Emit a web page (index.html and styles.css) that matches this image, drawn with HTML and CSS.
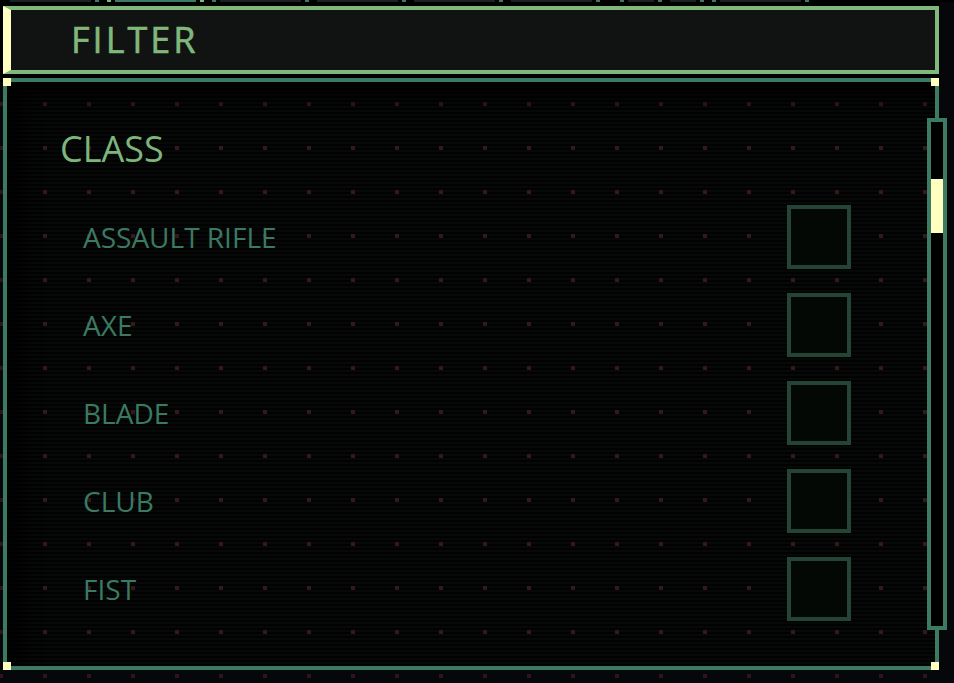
FILE: index.html
```html
<!DOCTYPE html>
<html lang="en">
<head>
<meta charset="utf-8">
<title>Filter</title>
<link rel="stylesheet" href="styles.css">
</head>
<body>
  <div class="tabs">
    <span class="seg dark w80 ml10"></span>
    <span class="seg mid w4 ml4"></span>
    <span class="seg light w4 ml8"></span>
    <span class="seg mid w80 ml4"></span>
    <span class="seg light w4 ml4"></span>
    <span class="seg mid w4 ml8"></span>
    <span class="seg dark w80 ml4"></span>
    <span class="seg mid w4 ml4"></span>
    <span class="seg dark w80 ml8"></span>
    <span class="seg mid w4 ml4"></span>
    <span class="seg dark w80 ml8"></span>
    <span class="seg mid w4 ml4"></span>
    <span class="seg dark w80 ml8"></span>
    <span class="seg mid w4 ml4"></span>
    <span class="seg mid w4 ml20"></span>
    <span class="seg dark w26 ml4"></span>
    <span class="seg mid w4 ml4"></span>
    <span class="seg dark w26 ml8"></span>
    <span class="seg mid w4 ml4"></span>
    <span class="seg mid w4 ml8"></span>
    <span class="seg dark w80 ml4"></span>
    <span class="seg mid w4 ml4"></span>
  </div>
  <main class="screen">
    <header class="head">
      <h1 class="head-title">FILTER</h1>
    </header>
    <section class="panel">
      <span class="corner tl"></span>
      <span class="corner tr"></span>
      <span class="corner bl"></span>
      <span class="corner br"></span>
      <div class="scrollbar"><div class="thumb"></div></div>
      <h2 class="group-title">CLASS</h2>
      <ul class="list">
        <li class="row"><span class="label">ASSAULT RIFLE</span><span class="check"></span></li>
        <li class="row"><span class="label">AXE</span><span class="check"></span></li>
        <li class="row"><span class="label">BLADE</span><span class="check"></span></li>
        <li class="row"><span class="label">CLUB</span><span class="check"></span></li>
        <li class="row"><span class="label">FIST</span><span class="check"></span></li>
      </ul>
    </section>
  </main>
</body>
</html>
```
FILE: styles.css
```css
html, body {
  margin: 0;
  padding: 0;
}
body {
  width: 954px;
  height: 683px;
  overflow: hidden;
  background-color: #05070a;
  background-image: conic-gradient(at 4px 4px, transparent 75%, #2e1517 0);
  background-size: 44px 44px;
  background-position: -1px 14px;
  font-family: "Open Sans", "Noto Sans", sans-serif;
}
.tabs {
  display: flex;
  height: 2px;
  background: #000;
}
.seg { display: block; height: 2px; flex: none; }
.dark { background: #1b2226; }
.mid { background: #3d7a62; }
.light { background: #80b87c; }
.w80 { width: 81px; }
.w26 { width: 26px; }
.w4 { width: 4px; }
.ml4 { margin-left: 4px; }
.ml8 { margin-left: 8px; }
.ml10 { margin-left: 10px; }
.ml20 { margin-left: 20px; }

.screen {
  padding: 4px 15px 0 3px;
  background: linear-gradient(#000, #000) no-repeat 0 0 / 940px 80px;
}
.head {
  box-sizing: border-box;
  height: 68px;
  border: 4px solid #80b87c;
  border-left: 8px solid #ffffc0;
  background: #111313;
  display: flex;
  align-items: center;
  padding-left: 60px;
}
.head-title {
  margin: 0;
  font-size: 36px;
  font-weight: 400;
  letter-spacing: 3px;
  color: #80b87c;
  -webkit-text-stroke: 0.6px #80b87c;
  line-height: 48px;
}
.panel {
  position: relative;
  box-sizing: border-box;
  height: 592px;
  margin-top: 4px;
  border: 4px solid #3d7a62;
  padding-top: 43px;
  background-color: #030303;
  background-image:
    conic-gradient(at 4px 4px, transparent 75%, #34181a 0),
    repeating-linear-gradient(to bottom, #070808 0 2px, #020202 2px 4px);
  background-size: 44px 44px, auto;
  background-position: 36px 20px, 0 0;
  box-shadow: inset 24px 24px 20px -10px rgba(0,0,0,0.8);
}
.corner {
  position: absolute;
  width: 8px;
  height: 8px;
  background: #ffffc0;
}
.tl { top: -4px; left: -4px; }
.tr { top: -4px; right: -4px; }
.bl { bottom: -4px; left: -4px; }
.br { bottom: -4px; right: -4px; }
.scrollbar {
  position: absolute;
  top: 36px;
  right: -12px;
  box-sizing: border-box;
  width: 20px;
  height: 512px;
  border: 4px solid #3d7a62;
  background: #000;
  padding-top: 57px;
}
.thumb {
  height: 54px;
  background: #ffffc0;
}
.group-title {
  margin: 0;
  padding-left: 53px;
  font-size: 36px;
  font-weight: 400;
  line-height: 48px;
  color: #7db67c;
}
.list {
  list-style: none;
  margin: 20px 0 0;
  padding: 0;
}
.row {
  display: flex;
  align-items: center;
  justify-content: space-between;
  height: 88px;
  padding-left: 76px;
  padding-right: 84px;
}
.label {
  font-size: 28px;
  color: #3b7a62;
  line-height: 38px;
}
.check {
  box-sizing: border-box;
  width: 64px;
  height: 64px;
  border: 4px solid #244536;
  background: #030805;
}
```
